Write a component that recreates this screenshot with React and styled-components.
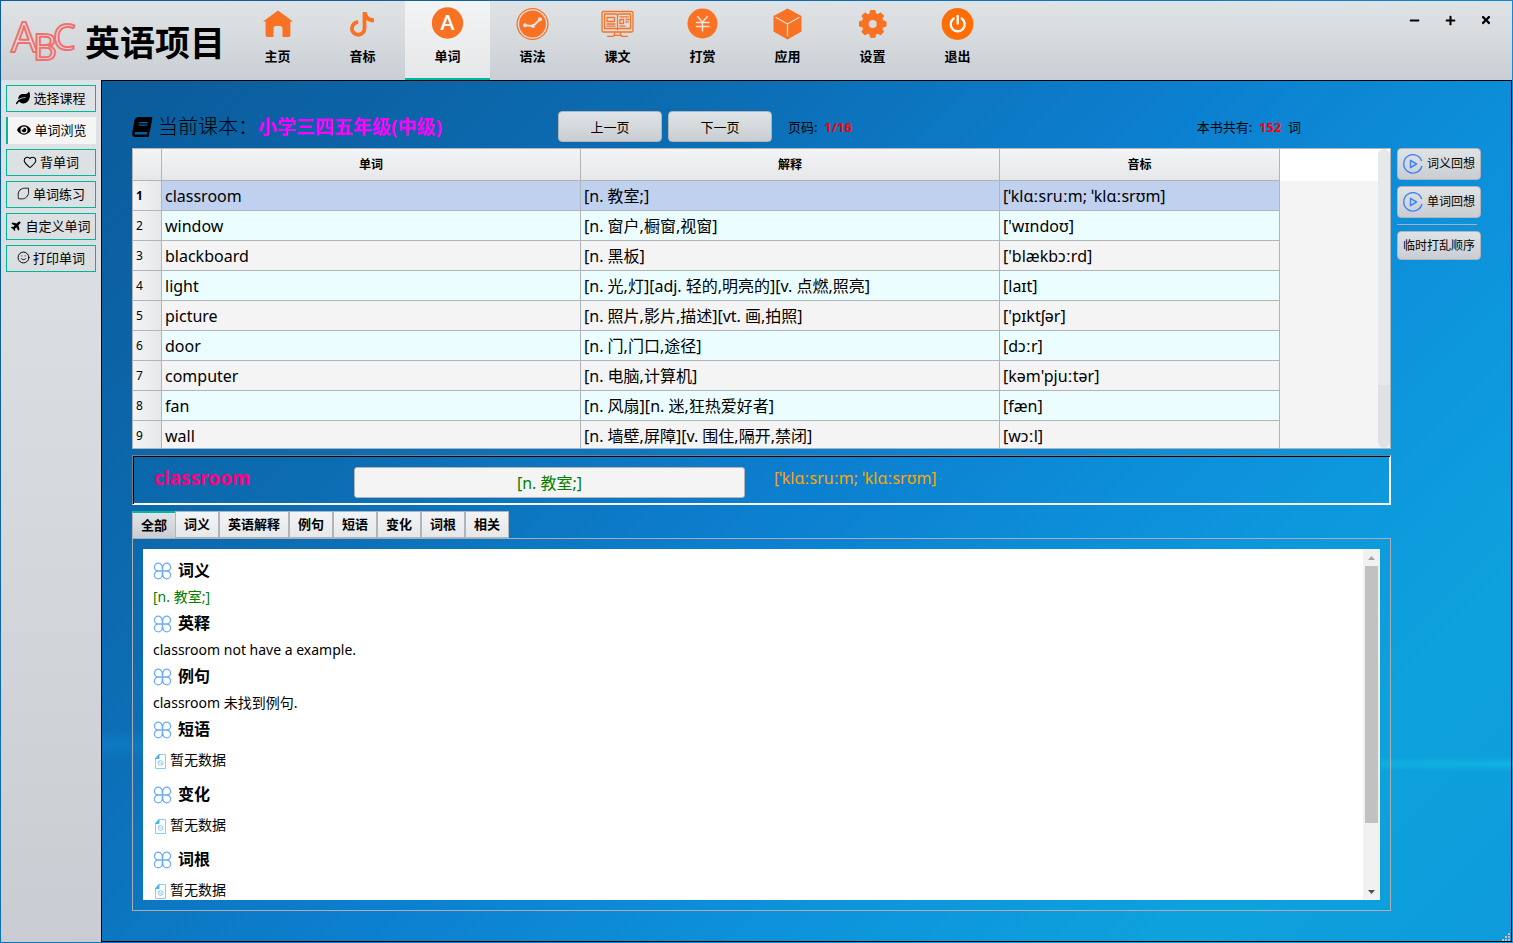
import React from "react";
import styled, { createGlobalStyle } from "styled-components";
import { FaLeaf, FaEye, FaPlane, FaBook, FaMinus, FaPlus, FaTimes } from "react-icons/fa";
import { Heart, Smile } from "lucide-react";

const ORANGE = "#f97123";
const TEAL = "#00b899";
const LINE = "#b1b4b8";
const METAL = "linear-gradient(#e0e3e5 0%, #d3d7da 60%, #c9cdd4 100%)";
const PALE = "linear-gradient(#f3f4f5, #e6e7e9)";
const SANS = '"Noto Sans", "Noto Sans CJK SC", sans-serif';

const GlobalStyle = createGlobalStyle`
  * { box-sizing: border-box; }
  body { margin: 0; font: 13px/16px ${SANS}; color: #000; }
  button, input { font: inherit; color: inherit; margin: 0; }
  h1, h2, p { margin: 0; }
  svg { display: block; flex: none; }
`;

const Window = styled.div`
  height: 100vh;
  min-height: 720px;
  padding: 1px;
  display: flex;
  flex-direction: column;
  background:
    radial-gradient(ellipse 320px 8px at 100% 81%, rgba(16, 188, 226, 0.7), transparent),
    radial-gradient(ellipse 240px 16px at 4% 79%, rgba(20, 150, 225, 0.3), transparent),
    linear-gradient(135deg, #0b5c9b 8%, #0c6cb2 32%, #0c80d0 53%, #0d95dc 72%, #0da2dd 86%, #0e9bdc 100%);
`;

const Header = styled.header`
  height: 79px;
  flex: none;
  display: flex;
  background: linear-gradient(#e0e3e5, #d6dadd 50%, #c9ced5);
`;

const Brand = styled.div`
  width: 234px;
  flex: none;
  display: flex;
  align-items: center;
  gap: 8px;
  padding: 4px 0 0 9px;
`;

const BrandName = styled.h1`
  font: bold 35px/48px ${SANS};
  white-space: nowrap;
`;

const Nav = styled.nav`
  display: flex;
  flex: 1;
`;

const NavButton = styled.button`
  width: 85px;
  padding: 6px 0 0;
  display: flex;
  flex-direction: column;
  align-items: center;
  gap: 7px;
  border: 0;
  border-bottom: 2px solid ${(p) => (p.$active ? TEAL : "transparent")};
  background: ${(p) => (p.$active ? PALE : "none")};
  font-weight: bold;
`;

const WindowControls = styled.div`
  display: flex;
  align-items: flex-start;
  padding: 1px 8px 0 0;
`;

const ControlButton = styled.button`
  width: 36px;
  height: 36px;
  display: grid;
  place-items: center;
  border: 0;
  padding: 0;
  background: none;
`;

const Body = styled.div`
  flex: 1;
  min-height: 0;
  display: flex;
`;

const Sidebar = styled.aside`
  width: 100px;
  flex: none;
  padding: 5px;
  display: flex;
  flex-direction: column;
  gap: 5px;
  background: linear-gradient(#e0e3e5, #d5d9dc 50%, #c9cdd3);
`;

const SideButton = styled.button`
  height: 27px;
  padding: 0 0 2px;
  display: flex;
  align-items: center;
  justify-content: center;
  gap: 3px;
  white-space: nowrap;
  border: ${(p) => (p.$active ? "0" : `1px solid ${TEAL}`)};
  border-left: ${(p) => (p.$active ? "2px" : "1px")} solid ${TEAL};
  background: ${(p) => (p.$active ? "#f5f5f5" : "transparent")};
`;

const Main = styled.main`
  position: relative;
  flex: 1;
  min-width: 0;
  display: flex;
  gap: 6px;
  padding: 30px;
  border: 1px solid #000;
`;

const Content = styled.div`
  flex: 1;
  min-width: 0;
  display: flex;
  flex-direction: column;
  gap: 6px;
`;

const Toolbar = styled.div`
  height: 31px;
  flex: none;
  display: flex;
  align-items: center;
  gap: 6px;
`;

const CurrentBook = styled.div`
  width: 420px;
  display: flex;
  align-items: center;
  gap: 6px;
  font-size: 20px;
  line-height: 28px;
  font-weight: 300;
  white-space: nowrap;
`;

const BookName = styled.strong`
  color: #f0f;
  font-size: 19px;
  font-weight: bold;
`;

const MetalButton = styled.button`
  height: ${(p) => p.$height}px;
  width: ${(p) => p.$width}px;
  padding: 0;
  display: flex;
  align-items: center;
  justify-content: center;
  gap: 4px;
  white-space: nowrap;
  border: 1px solid ${LINE};
  border-radius: 4px;
  background: ${METAL};
  font-size: ${(p) => p.$font || 13}px;
`;

const Info = styled.span`
  padding-left: 10px;
  white-space: pre;
`;

const Total = styled(Info)`
  margin-left: auto;
  padding-right: 90px;
`;

const Red = styled.strong`
  color: #f00;
`;

const TableFrame = styled.div`
  height: 301px;
  flex: none;
  display: flex;
  overflow: hidden;
  border: 1px solid ${LINE};
  background: linear-gradient(#fff 32px, #f4f4f4 32px);
`;

const TableScroll = styled.div`
  flex: 1;
  min-width: 0;
  overflow: hidden;
`;

const WordTable = styled.table`
  width: 1147px;
  table-layout: fixed;
  border-collapse: separate;
  border-spacing: 0;
`;

const ColHead = styled.th`
  width: ${(p) => p.$width}px;
  height: 32px;
  padding: 0;
  font-size: 12px;
  border: solid ${LINE};
  border-width: 0 1px 1px 0;
  background: ${PALE};
`;

const RowHead = styled.th`
  height: 30px;
  padding: 0 3px;
  text-align: left;
  font-size: 12px;
  font-weight: ${(p) => (p.$selected ? "bold" : "normal")};
  border: solid ${LINE};
  border-width: 0 1px 1px 0;
  background: linear-gradient(90deg, #f3f4f5, #e6e7e9);
`;

const Cell = styled.td`
  height: 30px;
  padding: 0 3px;
  font-size: 16px;
  line-height: 24px;
  white-space: nowrap;
  border: solid ${LINE};
  border-width: 0 1px 1px 0;
  background: ${(p) => (p.$selected ? "#c0d1ef" : p.$even ? "#ebfdff" : "#f4f4f4")};
`;

const TableBar = styled.div`
  width: 12px;
  flex: none;
  border-radius: 6px;
  background: linear-gradient(#e7e8ea 79%, #dfe2e5 79%);
`;

const WordBox = styled.section`
  height: 50px;
  flex: none;
  display: flex;
  align-items: flex-start;
  border: 1px solid;
  border-color: #7d7d7d #fff #fff #7d7d7d;
  box-shadow: inset 1px 1px #000, inset -1px -1px #fff;
  padding: 11px 0 0 21px;
`;

const Word = styled.strong`
  width: 200px;
  color: #ff0080;
  font-size: 19px;
  line-height: 22px;
`;

const Meaning = styled.input`
  width: 391px;
  height: 31px;
  padding: 0 0 2px;
  text-align: center;
  font-size: 16px;
  color: #008000;
  background: #f4f4f4;
  border: 1px solid ${LINE};
  border-radius: 3px;
`;

const Phonetic = styled.span`
  padding-left: 29px;
  color: #ffa500;
  font-size: 16px;
  line-height: 22px;
`;

const Tabs = styled.section`
  flex: 1;
  min-height: 0;
  display: flex;
  flex-direction: column;
`;

const TabList = styled.div`
  height: 27px;
  flex: none;
  display: flex;
`;

const Tab = styled.button`
  height: 27px;
  padding: 0 8px 1px;
  font-weight: bold;
  white-space: nowrap;
  border: 1px solid ${LINE};
  border-width: ${(p) => (p.$active ? "2px 0 0 1px" : "1px")};
  border-top-color: ${(p) => (p.$active ? TEAL : LINE)};
  background: ${(p) => (p.$active ? METAL : PALE)};
`;

const TabPanel = styled.div`
  flex: 1;
  min-height: 0;
  display: flex;
  padding: 10px;
  border: 1px solid #aaadb3;
`;

const Article = styled.div`
  flex: 1;
  overflow: hidden;
  padding: 8px 10px 0;
  background: #fff;
`;

const Heading = styled.h2`
  display: flex;
  align-items: center;
  gap: 6px;
  font-size: 16px;
  line-height: 27px;
`;

const Text = styled.p`
  font-size: 14px;
  line-height: 26px;
  color: ${(p) => (p.$green ? "#008000" : "#000")};
`;

const Empty = styled.p`
  height: 38px;
  display: flex;
  align-items: flex-start;
  gap: 3px;
  font-size: 14px;
  line-height: 34px;

  svg { margin-top: 11px; }
`;

const ArticleBar = styled.div`
  width: 17px;
  flex: none;
  display: flex;
  flex-direction: column;
  align-items: center;
  background: #f1f1f1;
`;

const Arrow = styled.button`
  width: 17px;
  height: 17px;
  padding: 0;
  border: 0;
  display: grid;
  place-items: center;
  background: none;
  color: ${(p) => p.$color};
`;

const ArticleTrack = styled.div`
  flex: 1;
  width: 13px;
`;

const ArticleThumb = styled.div`
  height: 81%;
  background: #c1c1c1;
`;

const Actions = styled.aside`
  width: 84px;
  flex: none;
  display: flex;
  flex-direction: column;
  gap: 6px;
  padding-top: 37px;
`;

const Divider = styled.hr`
  width: 80px;
  height: 1px;
  margin: 0;
  border: 0;
  background: #aaadb3;
`;

const Grip = styled.svg`
  position: absolute;
  right: 1px;
  bottom: 0;
`;

const Logo = styled.svg`
  overflow: visible;
  font-family: "Noto Sans", sans-serif;
  fill: #e2dfe1;
  stroke: #f07070;
  stroke-width: 2;
  stroke-linejoin: round;
`;

const LogoMark = () => (
  <Logo width="67" height="44" viewBox="0 0 67 44" aria-hidden="true">
    <text x="1" y="31" fontSize="41">A</text>
    <text x="23" y="39" fontSize="37">B</text>
    <text x="43" y="29" fontSize="36">C</text>
  </Logo>
);

const Icon = ({ children, size = 34 }) => (
  <svg width={size} height={size} viewBox="0 0 34 34" fill="none" stroke={ORANGE} strokeLinecap="round" strokeLinejoin="round" aria-hidden="true">
    {children}
  </svg>
);

const HomeIcon = () => (
  <Icon>
    <path d="M17 3.500 32 14.500h-2.600v13.800q0 1.700-1.700 1.700H21.500V21.500q0-2.500-2.500-2.500h-4q-2.500 0-2.500 2.500V30H6.300q-1.700 0-1.700-1.700V14.500H2Z" fill={ORANGE} stroke="none" />
  </Icon>
);
const NoteIcon = () => (
  <Icon>
    <path d="M18.500 6v15.500a6.300 6.300 0 1 1-6.300-6.300" strokeWidth="3.800" strokeLinecap="butt" />
    <path d="M16.600 5h4c.4 3.800 3 6 7.300 6.200v4.200c-3 0-5.500-.8-7.500-2.300z" fill={ORANGE} stroke="none" />
  </Icon>
);
const LetterIcon = () => (
  <Icon>
    <circle cx="16.500" cy="16" r="15.700" fill={ORANGE} stroke="none" />
    <text x="16.500" y="23" textAnchor="middle" fontSize="20" fontFamily="Lato, sans-serif" fill="#fff" stroke="none">A</text>
  </Icon>
);
const ChartIcon = () => (
  <Icon>
    <circle cx="16.500" cy="17" r="15.400" strokeWidth="1.300" />
    <circle cx="16.500" cy="17" r="13.400" fill={ORANGE} stroke="none" />
    <path d="m9 18.300 8 .7 7-6.500" stroke="#e6e4e2" strokeWidth="1.800" />
    <g fill="#e6e4e2" stroke="none"><circle cx="9" cy="18.300" r="2" /><circle cx="17" cy="19" r="1.900" /><circle cx="24" cy="12.300" r="2" /></g>
  </Icon>
);
const LessonIcon = () => (
  <Icon>
    <g strokeWidth="1.300">
      <rect x="1" y="4.500" width="31" height="20.500" rx="1.500" />
      <path d="M3.500 7h11q2 0 2 1.500Q16.500 7 18.500 7h11v14.500H18.500q-2 0-2 1-0-1-2-1H3.500ZM16.500 8.500V22M6 10.500h7.500v4H6ZM6 17h8M6 19.200h8M19 9.800h8.500M19 12.500h3.500v4H19ZM25 12.500h3M25 15h2M19 19.200h5M14 25.500l-1 3M19 25.500l1 3M6.500 29.300h5l2-1h6l2 1h5" />
    </g>
  </Icon>
);
const YenIcon = () => (
  <Icon>
    <circle cx="16.500" cy="16.500" r="15" fill={ORANGE} stroke="none" />
    <path d="m11.500 9.500 5 5.500 5-5.500M16.500 15V24M10.500 15.500h12.500M10.500 19.500h12.500" stroke="#f1e4dc" strokeWidth="1.500" />
  </Icon>
);
const CubeIcon = () => (
  <Icon>
    <path d="M16.500 1.500 30.500 9v15.500L16.500 32.500l-14-8V9Z" fill={ORANGE} stroke="none" />
    <path d="m5 10.500 11.500 6.500 11.500-6.500M16.500 17V28.500" stroke="#e6dcd5" strokeWidth="1.300" />
  </Icon>
);
const GearIcon = () => (
  <Icon>
    <path d="M14 6.500 14.500 3.500h4.500L19.500 6.500 22 7.600 24.600 5.800 27.700 8.900 26 11.500 27 14 30 14.600V19.200L27 19.700 26 22.200 27.700 24.800 24.600 27.900 22 26.200 19.500 27.200 19 30.300H14.500L14 27.200 11.500 26.200 8.900 27.900 5.800 24.800 7.500 22.200 6.500 19.700 3.500 19.200V14.600L6.500 14 7.500 11.500 5.800 8.900 8.900 5.800 11.500 7.600Z" fill={ORANGE} strokeWidth="1" />
    <circle cx="16.700" cy="16.900" r="4" fill="#d9dddf" stroke="none" />
  </Icon>
);
const PowerIcon = () => (
  <Icon>
    <circle cx="16.500" cy="17" r="15.900" fill="#ff6d05" stroke="none" />
    <path d="M12.700 11.500a7 7 0 1 0 8 0M16.700 9v7.500" stroke="#fff" strokeWidth="2.300" />
  </Icon>
);

const LemonIcon = () => (
  <svg width="13" height="13" viewBox="0 0 13 13" fill="none" stroke="#111" aria-hidden="true">
    <path d="M11.500 1.200C9.500 1.500 6 .3 3 3 .3 5.600 1.500 9 1.300 11.600c2.500.3 5.800 1 8.300-1.600C12.600 7 11.200 3.500 11.500 1.200Z" />
  </svg>
);

const PlayIcon = () => (
  <svg width="20" height="20" viewBox="0 0 20 20" fill="none" stroke="#3f83f8" strokeLinejoin="round" aria-hidden="true">
    <path d="M18.700 7A9.200 9.200 0 1 0 18.900 12" strokeWidth="1.400" />
    <path d="M7.500 6.300v7.400l6-3.700Z" strokeWidth="1.500" />
  </svg>
);

const CloverIcon = () => (
  <svg width="19" height="18" viewBox="0 0 19 18" fill="none" stroke="#6aabff" strokeWidth="1.300" aria-hidden="true">
    <path d="M9.500 9H5.300A3.900 3.900 0 1 1 9.200 5.100ZM9.500 9H13.700A3.900 3.900 0 1 0 9.800 5.100ZM9.500 9H5.300A3.900 3.900 0 1 0 9.200 12.900ZM9.500 9H13.700A3.900 3.900 0 1 1 9.800 12.900Z" />
  </svg>
);

const NoDataIcon = () => (
  <svg width="14" height="15" viewBox="0 0 14 15" fill="none" stroke="#85cdf8" aria-hidden="true">
    <path d="M6 .5h6.500v14h-10v-10Z" />
    <path d="M6 .5v4H2.500Z" fill="#4ab2f2" stroke="#4ab2f2" />
    <circle cx="7.500" cy="9" r="2.400" /><path d="m6 7.500 3 3" />
  </svg>
);

const NAV = [
  ["主页", HomeIcon],
  ["音标", NoteIcon],
  ["单词", LetterIcon],
  ["语法", ChartIcon],
  ["课文", LessonIcon],
  ["打赏", YenIcon],
  ["应用", CubeIcon],
  ["设置", GearIcon],
  ["退出", PowerIcon],
];

const SIDE = [
  ["选择课程", <FaLeaf size={14} />],
  ["单词浏览", <FaEye size={14} />],
  ["背单词", <Heart size={14} strokeWidth={1.8} />],
  ["单词练习", <LemonIcon />],
  ["自定义单词", <FaPlane size={11} style={{ transform: "rotate(-45deg)" }} />],
  ["打印单词", <Smile size={13} strokeWidth={1.8} />],
];

const WORDS = [
  ["classroom", "[n. 教室;]", "[ˈklɑːsruːm; ˈklɑːsrʊm]"],
  ["window", "[n. 窗户,橱窗,视窗]", "['wɪndoʊ]"],
  ["blackboard", "[n. 黑板]", "['blækbɔːrd]"],
  ["light", "[n. 光,灯][adj. 轻的,明亮的][v. 点燃,照亮]", "[laɪt]"],
  ["picture", "[n. 照片,影片,描述][vt. 画,拍照]", "['pɪktʃər]"],
  ["door", "[n. 门,门口,途径]", "[dɔːr]"],
  ["computer", "[n. 电脑,计算机]", "[kəm'pjuːtər]"],
  ["fan", "[n. 风扇][n. 迷,狂热爱好者]", "[fæn]"],
  ["wall", "[n. 墙壁,屏障][v. 围住,隔开,禁闭]", "[wɔːl]"],
];

const TABS = ["全部", "词义", "英语解释", "例句", "短语", "变化", "词根", "相关"];

const SECTIONS = [
  ["词义", "[n. 教室;]", true],
  ["英释", "classroom not have a example."],
  ["例句", "classroom 未找到例句."],
  ["短语"],
  ["变化"],
  ["词根"],
];

export default function App() {
  return (
    <>
      <GlobalStyle />
      <Window>
        <Header>
          <Brand>
            <LogoMark />
            <BrandName>英语项目</BrandName>
          </Brand>
          <Nav>
            {NAV.map(([label, Glyph], i) => (
              <NavButton key={label} type="button" $active={i === 2}>
                <Glyph />
                {label}
              </NavButton>
            ))}
          </Nav>
          <WindowControls>
            <ControlButton type="button" aria-label="最小化"><FaMinus size={11} /></ControlButton>
            <ControlButton type="button" aria-label="最大化"><FaPlus size={11} /></ControlButton>
            <ControlButton type="button" aria-label="关闭"><FaTimes size={12} /></ControlButton>
          </WindowControls>
        </Header>
        <Body>
          <Sidebar>
            {SIDE.map(([label, icon], i) => (
              <SideButton key={label} type="button" $active={i === 1}>
                {icon}
                {label}
              </SideButton>
            ))}
          </Sidebar>
          <Main>
            <Content>
              <Toolbar>
                <CurrentBook>
                  <FaBook size={20} style={{ transform: "skewX(-10deg)" }} />
                  <span>当前课本：<BookName>小学三四五年级(中级)</BookName></span>
                </CurrentBook>
                <MetalButton type="button" $width={104} $height={31}>上一页</MetalButton>
                <MetalButton type="button" $width={104} $height={31}>下一页</MetalButton>
                <Info>页码:  <Red>1/16</Red></Info>
                <Total>本书共有:  <Red>152</Red>  词</Total>
              </Toolbar>
              <TableFrame>
                <TableScroll>
                  <WordTable>
                    <thead>
                      <tr>
                        <ColHead $width={29} />
                        <ColHead $width={419}>单词</ColHead>
                        <ColHead $width={419}>解释</ColHead>
                        <ColHead $width={280}>音标</ColHead>
                      </tr>
                    </thead>
                    <tbody>
                      {WORDS.map((row, i) => (
                        <tr key={row[0]}>
                          <RowHead scope="row" $selected={i === 0}>{i + 1}</RowHead>
                          {row.map((value) => (
                            <Cell key={value} $selected={i === 0} $even={i % 2 === 1}>{value}</Cell>
                          ))}
                        </tr>
                      ))}
                    </tbody>
                  </WordTable>
                </TableScroll>
                <TableBar />
              </TableFrame>
              <WordBox>
                <Word>classroom</Word>
                <Meaning aria-label="解释" readOnly value="[n. 教室;]" />
                <Phonetic>[ˈklɑːsruːm; ˈklɑːsrʊm]</Phonetic>
              </WordBox>
              <Tabs>
                <TabList role="tablist">
                  {TABS.map((label, i) => (
                    <Tab key={label} type="button" role="tab" aria-selected={i === 0} $active={i === 0}>{label}</Tab>
                  ))}
                </TabList>
                <TabPanel role="tabpanel">
                  <Article>
                    {SECTIONS.map(([title, text, green]) => (
                      <section key={title}>
                        <Heading><CloverIcon />{title}</Heading>
                        {text ? <Text $green={green}>{text}</Text> : <Empty><NoDataIcon />暂无数据</Empty>}
                      </section>
                    ))}
                  </Article>
                  <ArticleBar>
                    <Arrow type="button" aria-label="向上滚动" $color="#a3a3a3">
                      <svg width="7" height="4" viewBox="0 0 7 4"><path d="M0 4 3.500 0 7 4Z" fill="currentColor" /></svg>
                    </Arrow>
                    <ArticleTrack><ArticleThumb /></ArticleTrack>
                    <Arrow type="button" aria-label="向下滚动" $color="#505050">
                      <svg width="7" height="4" viewBox="0 0 7 4"><path d="M0 0 3.500 4 7 0Z" fill="currentColor" /></svg>
                    </Arrow>
                  </ArticleBar>
                </TabPanel>
              </Tabs>
            </Content>
            <Actions>
              <MetalButton type="button" $width={84} $height={32} $font={12}><PlayIcon />词义回想</MetalButton>
              <MetalButton type="button" $width={84} $height={32} $font={12}><PlayIcon />单词回想</MetalButton>
              <Divider />
              <MetalButton type="button" $width={84} $height={29} $font={12}>临时打乱顺序</MetalButton>
            </Actions>
            <Grip width="8" height="8" viewBox="0 0 8 8" fill="#c4c0b8" aria-hidden="true">
              <path d="M6 0h2v2H6zM3 3h2v2H3zM6 3h2v2H6zM0 6h2v2H0zM3 6h2v2H3zM6 6h2v2H6z" />
            </Grip>
          </Main>
        </Body>
      </Window>
    </>
  );
}
